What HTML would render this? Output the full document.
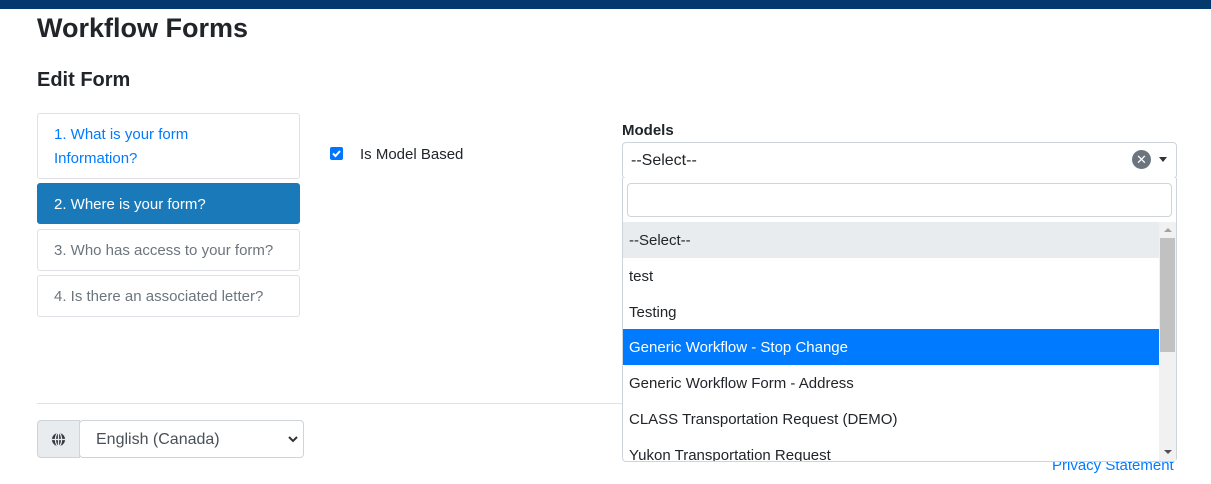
<!DOCTYPE html>
<html><head><meta charset="utf-8"><style>
*{box-sizing:border-box;margin:0;padding:0}
body{width:1211px;height:484px;overflow:hidden;background:#fff;font-family:"Liberation Sans",sans-serif;color:#212529;position:relative}
.a{position:absolute}
.nav{position:absolute;left:37px;width:263px;border:1px solid #dee2e6;border-radius:3px;font-size:15px;padding:0 16px;display:flex;align-items:center;line-height:24px;padding-top:2px}
.opt{position:absolute;left:623px;width:536px;height:36px;font-size:15px;padding-left:6px;line-height:38px}
</style></head><body>
<div class="a" style="left:0;top:0;width:1211px;height:9px;background:#03396c"></div>
<div class="a" style="left:37px;top:13px;font-size:27px;font-weight:bold;color:#212529">Workflow Forms</div>
<div class="a" style="left:37px;top:69px;font-size:20px;font-weight:bold;color:#212529">Edit Form</div>
<div class="nav" style="top:113px;height:66px;color:#007bff">1. What is your form<br>Information?</div>
<div class="nav" style="top:183px;height:41px;background:#1a7ab9;border-color:#1a7ab9;color:#fff">2. Where is your form?</div>
<div class="nav" style="top:229px;height:42px;color:#6c757d">3. Who has access to your form?</div>
<div class="nav" style="top:275px;height:42px;color:#6c757d">4. Is there an associated letter?</div>
<div class="a" style="left:330px;top:147px;width:13px;height:13px;background:#0075ff;border-radius:2px"><svg width="13" height="13" viewBox="0 0 13 13"><path d="M3 6.5l2.5 2.5 4.5-5" stroke="#fff" stroke-width="2" fill="none"/></svg></div>
<div class="a" style="left:360px;top:146px;font-size:15px">Is Model Based</div>
<div class="a" style="left:622px;top:122px;font-size:15px;font-weight:bold">Models</div>
<div class="a" style="left:1052px;top:457px;font-size:15px;color:#007bff">Privacy Statement</div>
<div class="a" style="left:37px;top:403px;width:1140px;height:1px;background:#dee2e6"></div>
<div class="a" style="left:37px;top:420px;width:43px;height:38px;background:#e9ecef;border:1px solid #ced4da;border-radius:4px 0 0 4px"><svg class="a" style="left:13px;top:11px" width="15" height="15" viewBox="0 0 16 16"><circle cx="8" cy="8" r="7" fill="#343a40"/><path d="M1 8h14M8 1v14" stroke="#e9ecef" stroke-width="1.3"/><ellipse cx="8" cy="8" rx="3.3" ry="7" stroke="#e9ecef" stroke-width="1.3" fill="none"/></svg></div>
<div class="a" style="left:79px;top:420px;width:225px;height:38px;border:1px solid #ced4da;border-radius:4px;font-size:16px;color:#495057;padding:10px 0 0 16px">English (Canada)<svg class="a" style="left:208px;top:15px" width="10" height="7" viewBox="0 0 10 7"><path d="M1 1l4 4 4-4" stroke="#333" stroke-width="2" fill="none"/></svg></div>
<div class="a" style="left:622px;top:142px;width:555px;height:37px;border:1px solid #ced4da;border-radius:4px;font-size:16px;padding:9px 0 0 8px;color:#212529">--Select--</div>
<div class="a" style="left:1132px;top:150px;width:19px;height:19px;border-radius:50%;background:#6c757d;color:#fff;font-size:13px;text-align:center;line-height:19px">✕</div>
<div class="a" style="left:1159px;top:157px;width:0;height:0;border-left:4px solid transparent;border-right:4px solid transparent;border-top:5px solid #333"></div>
<div class="a" style="left:622px;top:178px;width:555px;height:284px;border:1px solid #ced4da;border-top:none;background:#fff;border-radius:0 0 4px 4px"></div>
<div class="a" style="left:627px;top:183px;width:545px;height:34px;border:1px solid #ced4da;border-radius:4px"></div>
<div class="opt" style="top:222px;background:#e9ecef">--Select--</div>
<div class="opt" style="top:258px">test</div>
<div class="opt" style="top:294px">Testing</div>
<div class="opt" style="top:329px;background:#007bff;color:#fff">Generic Workflow - Stop Change</div>
<div class="opt" style="top:365px">Generic Workflow Form - Address</div>
<div class="opt" style="top:401px">CLASS Transportation Request (DEMO)</div>
<div class="a" style="left:623px;top:437px;width:536px;height:24px;overflow:hidden"><div style="font-size:15px;padding-left:6px;line-height:38px">Yukon Transportation Request</div></div>
<div class="a" style="left:1159px;top:222px;width:17px;height:239px;background:#f1f1f1"></div>
<div class="a" style="left:1160px;top:238px;width:15px;height:114px;background:#c1c1c1"></div>
<div class="a" style="left:1164px;top:228px;border-left:4px solid transparent;border-right:4px solid transparent;border-bottom:4px solid #a3a3a3"></div>
<div class="a" style="left:1164px;top:450px;border-left:4px solid transparent;border-right:4px solid transparent;border-top:4px solid #505050"></div>
</body></html>
